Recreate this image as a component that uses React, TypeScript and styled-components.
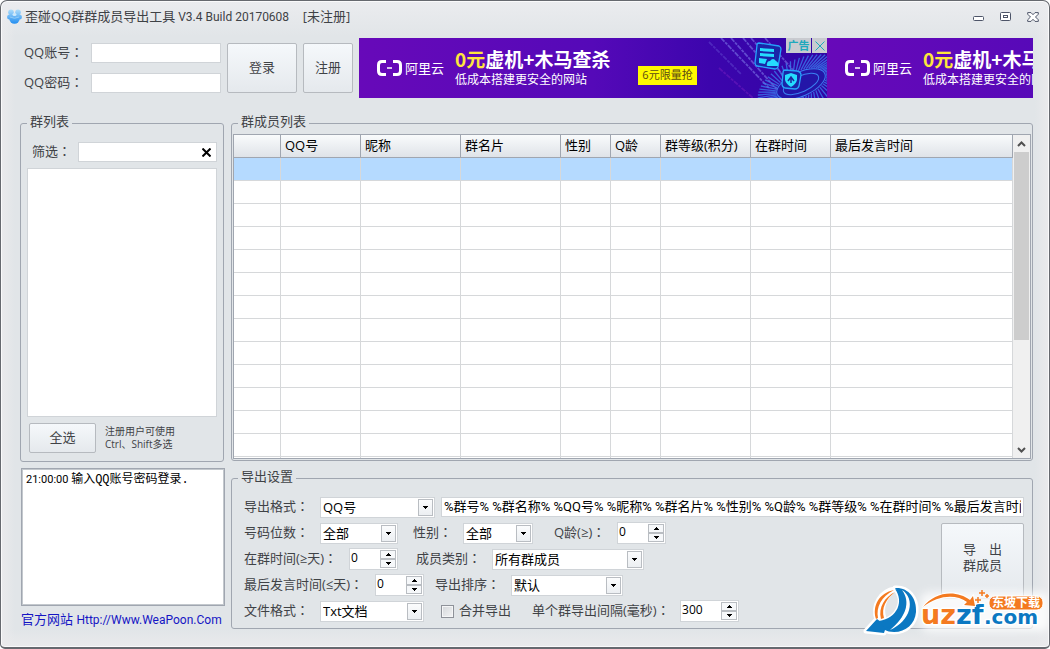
import React from 'react';
import styled, { createGlobalStyle, css } from 'styled-components';

const sans = `"Open Sans", "Noto Sans CJK SC", sans-serif`;
const line = '#a0a6b0';

const GlobalStyle = createGlobalStyle`
  *, *::before, *::after { box-sizing: border-box; }
  body { margin: 0; background: #fff; }
  body, button, input, select {
    font-family: ${sans};
    font-size: 13px;
    line-height: 18px;
    color: #3f4246;
  }
`;

const Window = styled.div`
  position: relative;
  display: flex;
  flex-direction: column;
  min-height: 100vh;
  padding-bottom: 18px;
  overflow: hidden;
  border: 1px solid #66696f;
  border-bottom-width: 2px;
  border-radius: 7px 7px 5px 5px;
  background:
    linear-gradient(#ebecef, rgba(225, 229, 232, 0) 36px),
    linear-gradient(to right, #eaeaec, rgba(225, 229, 232, 0) 14px),
    linear-gradient(to left, #eaeaec, rgba(225, 229, 232, 0) 14px),
    linear-gradient(to top, #eaeaec, rgba(225, 229, 232, 0) 18px),
    #e1e5e8;
  box-shadow: inset 0 0 0 1px #fafafb;
`;

const TitleBar = styled.header`
  display: flex;
  align-items: center;
  height: 37px;
  padding: 0 3px 6px 6px;
`;

const Title = styled.h1`
  flex: 1;
  margin: 0 0 0 3px;
  font-size: 13px;
  font-weight: 400;
  white-space: pre;
`;

const Version = styled.span`
  font-family: Roboto, sans-serif;
  font-size: 12px;
`;

const CaptionButton = styled.button`
  display: grid;
  place-items: center;
  width: 27px;
  height: 20px;
  padding: 0;
  border: 0;
  background: none;
`;

const TopBar = styled.div`
  display: flex;
  gap: 6px;
  height: 60px;
  margin: 0 16px 16px 23px;
`;

const Login = styled.form`
  display: flex;
  flex-direction: column;
  gap: 10px;
  padding-top: 5px;
  width: 197px;
`;

const FieldRow = styled.div`
  display: flex;
  align-items: center;
  height: 20px;
`;

const Label = styled.label<{ $w?: number }>`
  flex: none;
  width: ${(p) => (p.$w ? `${p.$w}px` : 'auto')};
  padding-bottom: 2px;
  white-space: nowrap;
`;

const Colon = styled.span`
  font-family: 'Noto Sans CJK TC', sans-serif;
`;

const TextBox = styled.input`
  flex: 1;
  min-width: 0;
  height: 20px;
  padding: 0 3px 2px;
  border: 1px solid #d0d4d8;
  border-radius: 0;
  background: #fff;
  color: #000;
  outline: 0;
`;

const TemplateBox = styled(TextBox)`
  padding: 0 2px 3px;
  font-family: Roboto, 'Noto Sans CJK SC', sans-serif;
`;

const Button = styled.button<{ $w: number; $h: number }>`
  flex: none;
  width: ${(p) => p.$w}px;
  height: ${(p) => p.$h}px;
  padding: 0 0 3px;
  border: 1px solid #b6babf;
  border-radius: 2px;
  background: linear-gradient(#f5f8fb, #e5e9ed);
  line-height: 16px;
`;

const TopButton = styled(Button)`
  margin-top: 5px;
`;

const Banner = styled.aside`
  display: flex;
  flex: 1;
  min-width: 0;
  overflow: hidden;
  background: #6408b8;
`;

const Ad = styled.a`
  position: relative;
  display: flex;
  flex: none;
  width: 468px;
  height: 60px;
  padding-left: 18px;
  overflow: hidden;
  background: linear-gradient(to right, #6709b9, #5509b8 50%, #3c05ad 75%, #3105a5);
  color: #fff;
  text-decoration: none;
`;

const Brand = styled.span`
  display: flex;
  align-items: center;
  gap: 3px;
  width: 78px;
`;

const AdCopy = styled.span`
  display: flex;
  flex-direction: column;
  width: 183px;
  padding-top: 9px;
  font-size: 12px;
  white-space: nowrap;
`;

const Headline = styled.strong`
  font-size: 19px;
  line-height: 24px;
  font-family: 'Noto Sans CJK SC', sans-serif;

  em { color: #ffe63c; font-style: normal; }
`;

const Offer = styled.span`
  align-self: flex-start;
  width: 59px;
  height: 19px;
  margin-top: 28px;
  background: #fff900;
  color: #5b4a14;
  font-size: 11px;
  line-height: 18px;
  text-align: center;
  white-space: nowrap;
`;

const AdArt = styled.svg`
  position: absolute;
  top: 0;
  right: 0;
`;

const AdTags = styled.span`
  position: absolute;
  top: 0;
  right: 0;
  display: flex;
  gap: 1px;
`;

const AdTag = styled.span<{ $w: number }>`
  display: grid;
  place-items: center;
  width: ${(p) => p.$w}px;
  height: 15px;
  background: #c9cbd0;
  color: #1fa9bd;
  font-size: 11px;
  font-weight: 700;
  line-height: 14px;
`;

const Main = styled.main`
  display: grid;
  flex: 1;
  grid-template-columns: 205px minmax(0, 1fr);
  gap: 6px;
  margin: 0 16px 0 19px;
`;

const Column = styled.div`
  display: flex;
  flex-direction: column;
  min-width: 0;
`;

const Group = styled.fieldset<{ $grow?: boolean }>`
  display: flex;
  flex-direction: column;
  min-width: 0;
  margin: 0;
  padding: 0;
  border: 1px solid ${line};
  border-radius: 3px;
  ${(p) =>
    p.$grow &&
    css`
      flex: 1 1 0;
      min-height: 260px;
    `}

  > legend {
    height: 18px;
    margin-left: 6px;
    padding: 0 3px;
    line-height: 15px;
  }
`;

const GroupBody = styled.div<{ $pad: string }>`
  display: flex;
  flex: 1;
  flex-direction: column;
  min-height: 0;
  padding: ${(p) => p.$pad};
`;

const ListGroup = styled(Group)`
  margin-right: 1px;
`;

const ExportSet = styled(Group)`
  margin-top: 8px;
`;

const Filter = styled(FieldRow)`
  position: relative;
  margin: 10px 0 6px;
  padding-left: 5px;
`;

const ClearButton = styled.button`
  position: absolute;
  right: 4px;
  display: grid;
  place-items: center;
  width: 13px;
  height: 16px;
  padding: 0;
  border: 0;
  background: none;
`;

const GroupList = styled.div`
  flex: 1;
  border: 1px solid #d0d4d8;
  background: #fff;
`;

const ListFooter = styled.div`
  display: flex;
  gap: 9px;
  align-items: center;
  padding: 6px 2px 0;
`;

const Hint = styled.p`
  margin: 0;
  font-size: 10px;
  line-height: 13px;
`;

const Log = styled.div`
  height: 138px;
  margin: 6px 0 4px 1px;
  padding: 1px 4px;
  border: 1px solid ${line};
  outline: 1px solid #c3c8cd;
  outline-offset: -2px;
  background: #fff;
  color: #000;
  font-size: 12px;
  line-height: 18px;
`;

const LogTime = styled.span`
  font-family: Roboto, sans-serif;
  font-size: 11px;
`;

const LogText = styled.span`
  font-family: 'Liberation Mono', 'Noto Sans CJK SC', monospace;
`;

const SiteLink = styled.a`
  height: 19px;
  margin-left: 1px;
  color: #1515c4;
  text-decoration: none;
  white-space: nowrap;

  span {
    font-family: Roboto, sans-serif;
    font-size: 12px;
  }
`;

const Viewport = styled.div`
  display: flex;
  flex: 1 1 0;
  min-height: 0;
  overflow: hidden;
  border: 1px solid ${line};
  background: #fff;
`;

const TableClip = styled.div`
  flex: 1;
  min-width: 0;
  overflow: hidden;
`;

const Table = styled.table`
  width: 100%;
  border-collapse: separate;
  border-spacing: 0;
  table-layout: fixed;
  color: #000;

  th, td {
    height: 23px;
    padding: 0 4px 3px;
    border-right: 1px solid #d6d8da;
    border-bottom: 1px solid #d6d8da;
    text-align: left;
    font-weight: 400;
    white-space: nowrap;
  }
  th {
    border-color: ${line};
    background: linear-gradient(#f9fbfc, #dfe3e8);
  }
`;

const Row = styled.tr<{ $selected: boolean }>`
  background: ${(p) => (p.$selected ? '#b5daff' : '#fff')};
`;

const ScrollBar = styled.div`
  display: flex;
  flex-direction: column;
  width: 17px;
  padding: 0 1px;
  background: #f0f0f0;
`;

const ScrollButton = styled.button`
  display: grid;
  place-items: center;
  height: 17px;
  padding: 0;
  border: 0;
  background: none;
`;

const Track = styled.div`
  flex: 1;
`;

const Thumb = styled.div`
  height: 65%;
  background: #cdcdcd;
`;

const FormRow = styled.div`
  display: flex;
  align-items: center;
  height: 26px;
`;

const ExportBody = styled.div`
  display: flex;
  justify-content: space-between;
`;

const ExportButton = styled(Button)`
  margin-top: 3px;
  padding-bottom: 8px;
  white-space: pre-line;
`;

const Space = styled.span<{ $w: number }>`
  flex: none;
  width: ${(p) => p.$w}px;
`;

const SelectFrame = styled.span<{ $w: number }>`
  position: relative;
  flex: none;
  width: ${(p) => p.$w}px;
  height: 21px;

  select {
    width: 100%;
    height: 21px;
    padding: 0 2px;
    border: 1px solid #d0d4d8;
    border-radius: 0;
    background: #fff;
    color: #000;
    appearance: none;
  }
`;

const Caret = styled.span`
  position: absolute;
  top: 2px;
  right: 2px;
  display: grid;
  place-items: center;
  width: 15px;
  height: 17px;
  border: 1px solid #b9bdc2;
  background: linear-gradient(#fbfcfd, #eceff2);
  pointer-events: none;
`;

const SpinFrame = styled.span<{ $w: number }>`
  display: flex;
  flex: none;
  width: ${(p) => p.$w}px;
  height: 22px;
  padding: 1px;
  border: 1px solid #d0d4d8;
  background: #fff;

  input {
    flex: 1;
    min-width: 0;
    height: 16px;
    padding: 0;
    border: 0;
    background: none;
    color: #000;
    font-size: 12px;
    outline: 0;
  }
`;

const SpinButtons = styled.span`
  display: flex;
  flex-direction: column;
  width: 16px;

  button {
    display: grid;
    flex: 1;
    place-items: center;
    min-height: 0;
    padding: 0;
    border: 1px solid #b9bdc2;
    background: #f6f8fa;
  }
`;

const Check = styled.input`
  appearance: none;
  width: 13px;
  height: 13px;
  margin: 0 5px 0 0;
  border: 1px solid #8e9299;
  background: linear-gradient(135deg, #d4d7da, #f3f4f5);
  outline: 1px solid #f5f6f7;
  outline-offset: -2px;
`;

const Watermark = styled.svg`
  position: absolute;
  right: -1px;
  bottom: -2px;
  pointer-events: none;
`;

function Triangle({ up }: { up?: boolean }) {
  return (
    <svg width="5" height="3" viewBox="0 0 5 3" shapeRendering="crispEdges">
      <path d={up ? 'M0 3L2.5 0L5 3z' : 'M0 0H5L2.5 3z'} fill="#000" />
    </svg>
  );
}

function Field({ text, id, w }: { text: string; id: string; w?: number }) {
  return (
    <Label htmlFor={id} $w={w}>
      {text}
      <Colon>：</Colon>
    </Label>
  );
}

function Select({ id, w, value }: { id: string; w: number; value: string }) {
  return (
    <SelectFrame $w={w}>
      <select id={id} defaultValue={value}>
        <option>{value}</option>
      </select>
      <Caret>
        <Triangle />
      </Caret>
    </SelectFrame>
  );
}

function Spinner({ id, w, value }: { id: string; w: number; value: number }) {
  const [n, setN] = React.useState(value);
  return (
    <SpinFrame $w={w}>
      <input id={id} value={n} onChange={(e) => setN(Number(e.target.value) || 0)} />
      <SpinButtons>
        <button type="button" aria-label="增加" onClick={() => setN(n + 1)}>
          <Triangle up />
        </button>
        <button type="button" aria-label="减少" onClick={() => setN(Math.max(0, n - 1))}>
          <Triangle />
        </button>
      </SpinButtons>
    </SpinFrame>
  );
}

function AppIcon() {
  return (
    <svg width="15" height="15" viewBox="0 0 15 15">
      <defs>
        <linearGradient id="paw" x1="0" y1="0" x2="0" y2="15" gradientUnits="userSpaceOnUse">
          <stop offset="0" stopColor="#b4e0fb" />
          <stop offset="1" stopColor="#1f8cf0" />
        </linearGradient>
      </defs>
      <g fill="url(#paw)">
        <circle cx="4" cy="3.200" r="2.800" />
        <circle cx="11" cy="3.200" r="2.800" />
        <circle cx="2.600" cy="8" r="2.500" />
        <circle cx="12.400" cy="8" r="2.500" />
        <circle cx="7.500" cy="9.500" r="5.200" />
      </g>
      <ellipse cx="7.500" cy="5.500" rx="2" ry="1.500" fill="#cdeafd" />
      <path d="M3 8Q7.500 10.500 12 8" fill="none" stroke="#8fcbf8" />
    </svg>
  );
}

const rays = Array.from({ length: 60 }, (_, i) => (i * Math.PI * 2) / 60);

function AdUnit() {
  return (
    <Ad href="#ad">
      <AdArt width="120" height="60" viewBox="0 0 120 60">
        <g stroke="#7d78e8" strokeWidth="1.800" strokeDasharray="5 1 3 1" opacity=".6">
          <path d="M14 0L62 50" />
          <path d="M24 0L74 56" />
          <path d="M36 0L62 30" />
          <path d="M44 0L96 60" />
          <path d="M58 0L86 32" />
          <path d="M2 4L34 36" opacity=".5" />
          <path d="M12 30L46 60" stroke="#a030d0" opacity=".5" />
        </g>
        <g transform="rotate(-24 94 46)" fill="none" stroke="#3a80f0">
          {rays.map((a) => (
            <path
              key={a}
              strokeWidth="1.300"
              opacity=".75"
              d={`M${94 + 27 * Math.cos(a)} ${46 + 13 * Math.sin(a)}L${94 + 46 * Math.cos(a + 0.2)} ${46 + 25 * Math.sin(a + 0.2)}`}
            />
          ))}
          <ellipse cx="94" cy="46" rx="26" ry="12" fill="#2416a8" />
          <ellipse cx="94" cy="46" rx="19" ry="8" />
        </g>
        <g fill="#1a25a8" stroke="#25a3fb" strokeWidth="1.300">
          <path d="M52 5L72 8Q74 9 74 11L71 29Q70 31 68 31L50 28Q48 27 48 25L50 7Q50 5 52 5z" />
          <path d="M78 32L90 33Q94 34 94 37L92 48Q91 51 88 51L78 50Q75 49 75 46L76 35Q76 32 78 32z" />
        </g>
        <path
          d="M53 10l14 1v3l-14-1zM53 15l14 1v3l-14-1zM52 20l8 1-2 5-6-1zM60 26Q60 23 63 23Q66 19 69 23Q72 24 71 28H61Q59 28 60 26z"
          fill="#25dcff"
        />
        <path d="M84 35L90 37V42Q89 46 84 49Q79 46 78 42V37z" fill="#25dcff" />
        <path d="M81 43L84 39L87 43M84 40V45" fill="none" stroke="#1b2a9c" strokeWidth="1.500" />
      </AdArt>
      <Brand>
        <svg width="25" height="16" viewBox="0 0 25 16" fill="none" stroke="#fff">
          <path d="M9 1.500H5Q1.500 1.500 1.500 5V11Q1.500 14.500 5 14.500H9" strokeWidth="3" />
          <path d="M16 1.500H20Q23.500 1.500 23.500 5V11Q23.500 14.500 20 14.500H16" strokeWidth="3" />
          <path d="M10 8H15" strokeWidth="1.500" />
        </svg>
        阿里云
      </Brand>
      <AdCopy>
        <Headline>
          <em>0元</em>虚机+木马查杀
        </Headline>
        低成本搭建更安全的网站
      </AdCopy>
      <Offer>6元限量抢</Offer>
      <AdTags>
        <AdTag $w={25}>广告</AdTag>
        <AdTag $w={15}>
          <svg width="10" height="10" viewBox="0 0 10 10" stroke="#1fa9bd">
            <path d="M.5 .5L9.500 9.500M9.500 .5L.5 9.500" />
          </svg>
        </AdTag>
      </AdTags>
    </Ad>
  );
}

function SiteMark() {
  return (
    <Watermark width="190" height="69" viewBox="0 0 190 69">
      <defs>
        <filter id="glow" x="-20%" y="-50%" width="140%" height="200%">
          <feGaussianBlur stdDeviation="4" />
        </filter>
      </defs>
      <rect x="60" y="12" width="130" height="40" rx="10" fill="#fff" opacity=".8" filter="url(#glow)" />
      <g stroke="#fff" strokeWidth="5" strokeLinejoin="round" style={{ paintOrder: 'stroke' }}>
        <path d="M35 9C21 11 12 25 17 40L24 38C20 27 25 16 35 9z" fill="#fff" />
        <path
          d="M35 8C48 7 57 18 56 32C55 44 46 52 34 52C30 52 27 51 25 50L24 53L6 51L17 39L21 42C37 38 47 22 35 8z"
          fill="#0b78c2"
        />
      </g>
      <path d="M34 10C19 13 12 26 16 39L18 38C16 27 21 17 34 10z" fill="#f47a20" />
      <path d="M35 12C25 17 18 27 21 39L24 38C21 28 26 19 35 12z" fill="#f47a20" />
      <path d="M42 10C56 19 51 41 30 50C46 37 51 22 42 10z" fill="#fff" />
      <path d="M35 9C52 17 49 38 25 49L19 41C38 38 44 21 35 9z" fill="#0b78c2" />
      <g
        fontFamily="DejaVu Sans"
        fontWeight="700"
        stroke="#fff"
        strokeWidth="3"
        strokeLinejoin="round"
        style={{ paintOrder: 'stroke' }}
      >
        <text x="61" y="44" fontSize="27" fill="#f47a20">
          uz<tspan fill="#0b78c2">zf</tspan>
        </text>
        <text x="124" y="44" fontSize="20" fill="#0b78c2">
          .com
        </text>
      </g>
      <path
        d="M63 27C74 12 96 9 110 20L113 16L115 26L104 25L107 22C96 14 78 15 63 27z"
        fill="#f47a20"
        stroke="#fff"
        strokeWidth="2"
        style={{ paintOrder: 'stroke' }}
      />
      <path d="M118 17v6M115 20h6M122 10v6M119 13h6M127 14v4M125 16h4" stroke="#f47a20" strokeWidth="1.500" />
      <rect x="129" y="16" width="54" height="14" rx="6" fill="#f47a20" stroke="#fff" />
      <text x="132" y="27" fontFamily="Noto Sans CJK SC" fontWeight="700" fontSize="12" fill="#fff">
        东坡下载
      </text>
    </Watermark>
  );
}

const columns: { name: string; w?: number }[] = [
  { name: '', w: 47 },
  { name: 'QQ号', w: 80 },
  { name: '昵称', w: 100 },
  { name: '群名片', w: 100 },
  { name: '性别', w: 50 },
  { name: 'Q龄', w: 50 },
  { name: '群等级(积分)', w: 90 },
  { name: '在群时间', w: 80 },
  { name: '最后发言时间' },
];

function GroupPanel() {
  return (
    <ListGroup $grow>
      <legend>群列表</legend>
      <GroupBody $pad="0 6px 8px">
        <Filter>
          <Field text="筛选" id="filter" w={46} />
          <TextBox id="filter" />
          <ClearButton aria-label="清除">
            <svg width="9" height="9" viewBox="0 0 9 9" stroke="#000" strokeWidth="2">
              <path d="M.5 .5L8.500 8.500M8.500 .5L.5 8.500" />
            </svg>
          </ClearButton>
        </Filter>
        <GroupList />
        <ListFooter>
          <Button $w={67} $h={30}>
            全选
          </Button>
          <Hint>
            注册用户可使用
            <br />
            Ctrl、Shift多选
          </Hint>
        </ListFooter>
      </GroupBody>
    </ListGroup>
  );
}

function MemberPanel() {
  return (
    <Group $grow>
      <legend>群成员列表</legend>
      <GroupBody $pad="2px 1px 1px">
        <Viewport>
          <TableClip>
            <Table>
              <colgroup>
                {columns.map((c) => (
                  <col key={c.name} width={c.w} />
                ))}
              </colgroup>
              <thead>
                <tr>
                  {columns.map((c) => (
                    <th key={c.name}>{c.name}</th>
                  ))}
                </tr>
              </thead>
              <tbody>
                {Array.from({ length: 14 }, (_, r) => (
                  <Row key={r} $selected={r === 0}>
                    {columns.map((c) => (
                      <td key={c.name} />
                    ))}
                  </Row>
                ))}
              </tbody>
            </Table>
          </TableClip>
          <ScrollBar>
            <ScrollButton aria-label="向上滚动">
              <svg width="9" height="6" viewBox="0 0 9 6" fill="none" stroke="#505050" strokeWidth="2">
                <path d="M1 5L4.500 1.500L8 5" />
              </svg>
            </ScrollButton>
            <Track>
              <Thumb />
            </Track>
            <ScrollButton aria-label="向下滚动">
              <svg width="9" height="6" viewBox="0 0 9 6" fill="none" stroke="#505050" strokeWidth="2">
                <path d="M1 1L4.500 4.500L8 1" />
              </svg>
            </ScrollButton>
          </ScrollBar>
        </Viewport>
      </GroupBody>
    </Group>
  );
}

function ExportPanel() {
  return (
    <ExportSet>
      <legend>导出设置</legend>
      <GroupBody $pad="7px 8px 4px 12px">
        <FormRow>
          <Field text="导出格式" id="format" w={76} />
          <Select id="format" w={115} value="QQ号" />
          <Space $w={6} />
          <TemplateBox
            aria-label="导出模板"
            defaultValue="%群号% %群名称% %QQ号% %昵称% %群名片% %性别% %Q龄% %群等级% %在群时间% %最后发言时间%"
          />
        </FormRow>
        <ExportBody>
          <div>
            <FormRow>
              <Field text="号码位数" id="digits" w={76} />
              <Select id="digits" w={78} value="全部" />
              <Space $w={15} />
              <Field text="性别" id="sex" w={50} />
              <Select id="sex" w={70} value="全部" />
              <Space $w={21} />
              <Field text="Q龄(≥)" id="age" w={63} />
              <Spinner id="age" w={49} value={0} />
            </FormRow>
            <FormRow>
              <Field text="在群时间(≥天)" id="joined" w={105} />
              <Spinner id="joined" w={49} value={0} />
              <Space $w={18} />
              <Field text="成员类别" id="kind" w={76} />
              <Select id="kind" w={152} value="所有群成员" />
            </FormRow>
            <FormRow>
              <Field text="最后发言时间(≤天)" id="spoke" w={131} />
              <Spinner id="spoke" w={49} value={0} />
              <Space $w={11} />
              <Field text="导出排序" id="order" w={76} />
              <Select id="order" w={112} value="默认" />
            </FormRow>
            <FormRow>
              <Field text="文件格式" id="file" w={76} />
              <Select id="file" w={104} value="Txt文档" />
              <Space $w={17} />
              <Check type="checkbox" id="merge" />
              <Label htmlFor="merge">合并导出</Label>
              <Space $w={21} />
              <Field text="单个群导出间隔(毫秒)" id="delay" w={148} />
              <Spinner id="delay" w={59} value={300} />
            </FormRow>
          </div>
          <ExportButton $w={83} $h={76}>
            {'导　出\n群成员'}
          </ExportButton>
        </ExportBody>
      </GroupBody>
    </ExportSet>
  );
}

export default function App() {
  return (
    <Window>
      <GlobalStyle />
      <TitleBar>
        <AppIcon />
        <Title>
          歪碰QQ群群成员导出工具<Version> V3.4 Build 20170608</Version>
          {'    '}[未注册]
        </Title>
        <CaptionButton aria-label="最小化">
          <svg width="11" height="11" viewBox="0 0 11 11">
            <rect x=".5" y="5.500" width="10" height="4" rx="1" fill="#fff" stroke="#4d5468" />
          </svg>
        </CaptionButton>
        <CaptionButton aria-label="最大化">
          <svg width="11" height="9" viewBox="0 0 11 9" stroke="#4d5468">
            <rect x=".5" y=".5" width="10" height="8" rx="1" fill="#fff" />
            <rect x="3.500" y="3.500" width="4" height="2" fill="#fff" />
          </svg>
        </CaptionButton>
        <CaptionButton aria-label="关闭">
          <svg width="12" height="10" viewBox="0 0 12 10">
            <path
              d="M.7 .6H4L6 2.700L8 .6H11.300V2.200L8.500 5L11.300 7.800V9.400H8L6 7.300L4 9.400H.7V7.800L3.500 5L.7 2.200z"
              fill="#fff"
              stroke="#4d5468"
            />
          </svg>
        </CaptionButton>
      </TitleBar>

      <TopBar>
        <Login>
          <FieldRow>
            <Field text="QQ账号" id="account" w={67} />
            <TextBox id="account" />
          </FieldRow>
          <FieldRow>
            <Field text="QQ密码" id="password" w={67} />
            <TextBox id="password" type="password" />
          </FieldRow>
        </Login>
        <TopButton $w={70} $h={50}>
          登录
        </TopButton>
        <TopButton $w={50} $h={50}>
          注册
        </TopButton>
        <Banner>
          <AdUnit />
          <AdUnit />
        </Banner>
      </TopBar>

      <Main>
        <Column>
          <GroupPanel />
          <Log>
            <LogTime>21:00:00 </LogTime>
            <LogText>输入QQ账号密码登录.</LogText>
          </Log>
          <SiteLink href="#site">
            官方网站 <span>Http://Www.WeaPoon.Com</span>
          </SiteLink>
        </Column>

        <Column>
          <MemberPanel />
          <ExportPanel />
        </Column>
      </Main>
      <SiteMark />
    </Window>
  );
}
